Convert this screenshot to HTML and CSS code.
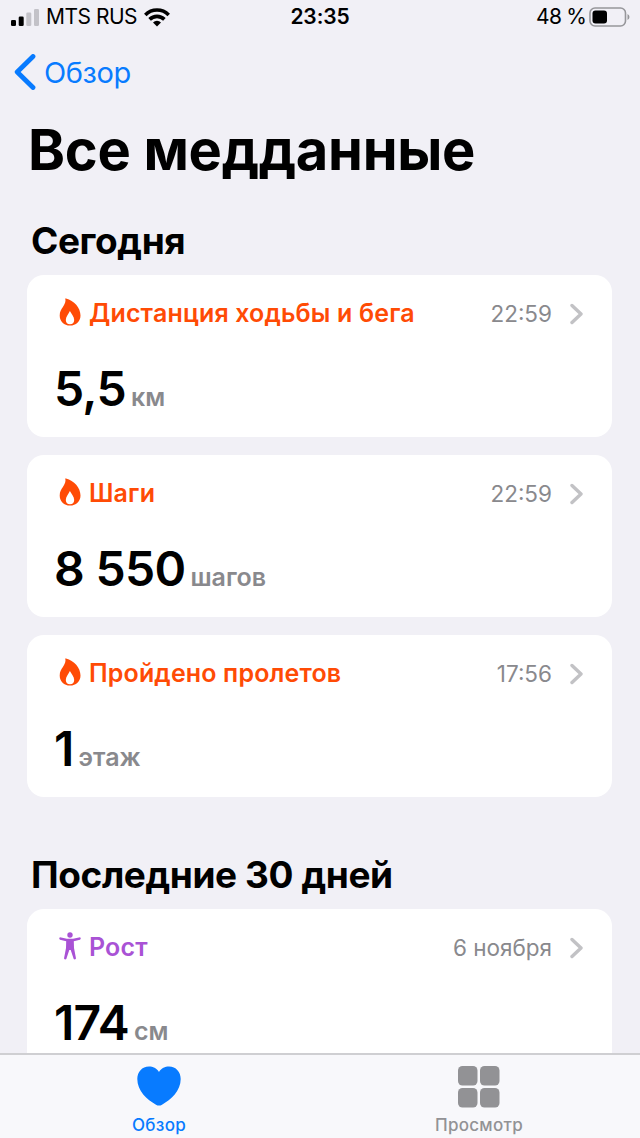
FILE: index.html
```html
<!DOCTYPE html>
<html lang="ru">
<head>
    <meta charset="UTF-8">
    <meta name="viewport" content="width=device-width, initial-scale=1.0">
    <title>Все медданные</title>
    <link rel="stylesheet" href="styles.css">
</head>
<body>
    <svg class="symbols" width="0" height="0">
        <symbol id="flame" viewBox="0 0 22 28">
            <path fill-rule="evenodd" d="M7 .4C15 2.500 21.500 9.500 21.500 17.500C21.500 23.500 17 27.600 11 27.600C5 27.600 .7 23.500 .7 17.500C.7 13.500 2.200 11.500 3.900 9C5.800 6.200 7 3.500 6.300 .8Q6.300 .2 7 .4ZM10.900 13C9.800 15.500 6.800 18.500 6.800 22C6.800 24.800 8.500 26.300 11 26.300C13.500 26.300 15.200 24.800 15.200 22C15.200 18.500 12.200 15.500 10.900 13Z"/>
        </symbol>
        <symbol id="chevron" viewBox="0 0 14 22">
            <path d="M2 2.500 11 11 2 19.500" fill="none" stroke="currentColor" stroke-width="3.400" stroke-linecap="round" stroke-linejoin="round"/>
        </symbol>
    </svg>

    <div class="screen">
        <header class="status-bar">
            <div class="carrier">
                <svg width="28" height="19" viewBox="0 0 28 19">
                    <rect x="0" y="12" width="5" height="6" rx="1.300"/>
                    <rect x="7.700" y="8.500" width="5" height="9.500" rx="1.300"/>
                    <rect class="off" x="15.300" y="4.500" width="5" height="13.500" rx="1.300"/>
                    <rect class="off" x="23" y="1" width="5" height="17" rx="1.300"/>
                </svg>
                <span class="carrier-name">MTS RUS</span>
                <svg width="26" height="19" viewBox="0 0 26 19">
                    <g fill="none" stroke="#000" stroke-width="3.600">
                        <path d="M1.300 6.900A16.500 16.500 0 0 1 24.700 6.900"/>
                        <path d="M5.600 11.400A10.500 10.500 0 0 1 20.400 11.400"/>
                    </g>
                    <path d="M9 14.400A5.800 5.800 0 0 1 17 14.400L13 18.600Z"/>
                </svg>
            </div>
            <div class="clock">23:35</div>
            <div class="battery">
                <span>48 %</span>
                <svg width="41" height="20" viewBox="0 0 41 20">
                    <rect x="1" y="1" width="35.500" height="18" rx="5" fill="none" stroke="#96969a" stroke-width="1.600"/>
                    <rect x="3.500" y="3.500" width="14.500" height="13" rx="3"/>
                    <path d="M38.500 7Q40.500 8 40.500 10T38.500 13Z" fill="#96969a"/>
                </svg>
            </div>
        </header>

        <nav class="nav-bar">
            <svg width="22" height="36" viewBox="0 0 22 36">
                <path d="M19 2.500 3.200 18 19 33.500" fill="none" stroke="currentColor" stroke-width="4.800" stroke-linecap="round" stroke-linejoin="round"/>
            </svg>
            <span>Обзор</span>
        </nav>

        <main class="content">
            <h1>Все медданные</h1>

            <section>
                <h2>Сегодня</h2>
                <article class="card">
                    <div class="card-head">
                        <svg class="icon"><use href="#flame"/></svg>
                        <h3>Дистанция ходьбы и бега</h3>
                        <time>22:59</time>
                        <svg class="chevron"><use href="#chevron"/></svg>
                    </div>
                    <p class="reading"><b>5,5</b><span>км</span></p>
                </article>
                <article class="card">
                    <div class="card-head">
                        <svg class="icon"><use href="#flame"/></svg>
                        <h3>Шаги</h3>
                        <time>22:59</time>
                        <svg class="chevron"><use href="#chevron"/></svg>
                    </div>
                    <p class="reading"><b>8 550</b><span>шагов</span></p>
                </article>
                <article class="card">
                    <div class="card-head">
                        <svg class="icon"><use href="#flame"/></svg>
                        <h3>Пройдено пролетов</h3>
                        <time>17:56</time>
                        <svg class="chevron"><use href="#chevron"/></svg>
                    </div>
                    <p class="reading"><b>1</b><span>этаж</span></p>
                </article>
            </section>

            <section class="month">
                <h2>Последние 30 дней</h2>
                <article class="card body-data">
                    <div class="card-head">
                        <svg class="icon" viewBox="0 0 22 28">
                            <circle cx="11" cy="3" r="2.700"/>
                            <path d="M.9 5.200 8 6.700H14L21.100 5.200Q22.500 6.700 21 7.700L14.800 9.200 15 16 17 26.500Q16 28 14.700 27L11.700 18H10.300L7.300 27Q6 28 5 26.500L7 16 7.200 9.200 1 7.700Q-.5 6.700 .9 5.200Z"/>
                        </svg>
                        <h3>Рост</h3>
                        <time>6 ноября</time>
                        <svg class="chevron"><use href="#chevron"/></svg>
                    </div>
                    <p class="reading"><b>174</b><span>см</span></p>
                </article>
            </section>
        </main>

        <footer class="tab-bar">
            <div class="tab active">
                <svg width="44" height="40" viewBox="0 0 44 40">
                    <path d="M22 6C19.500 2 16 .5 12 .5C5 .5 .3 6 .3 13C.3 25 10 33.500 19 38.700Q22 40.500 25 38.700C34 33.500 43.700 25 43.700 13C43.700 6 39 .5 32 .5C28 .5 24.500 2 22 6Z"/>
                </svg>
                <span>Обзор</span>
            </div>
            <div class="tab">
                <svg width="42" height="42" viewBox="0 0 42 42">
                    <rect x="0" y="0" width="19.500" height="19.500" rx="4.500"/>
                    <rect x="22" y="0" width="19.500" height="19.500" rx="4.500"/>
                    <rect x="0" y="22" width="19.500" height="19.500" rx="4.500"/>
                    <rect x="22" y="22" width="19.500" height="19.500" rx="4.500"/>
                </svg>
                <span>Просмотр</span>
            </div>
        </footer>
    </div>
</body>
</html>
```
FILE: styles.css
```css
:root {
    --bg: #f1f0f6;
    --blue: #087bff;
    --orange: #ff4b05;
    --purple: #a952d5;
    --gray: #89898d;
}

* {
    box-sizing: border-box;
}

body {
    margin: 0;
    background: var(--bg);
    color: #000;
    font-family: Inter, "Liberation Sans", sans-serif;
}

h1, h2, h3, p {
    margin: 0;
}

.symbols {
    position: absolute;
}

.screen {
    display: flex;
    flex-direction: column;
    width: 640px;
    height: 1138px;
    overflow: hidden;
}

/* status bar */
.status-bar {
    display: grid;
    grid-template-columns: 1fr auto 1fr;
    align-items: center;
    flex: none;
    height: 34px;
    padding: 0 10px 0 11px;
    font-size: 21px;
    line-height: 34px;
}

.carrier,
.battery {
    display: flex;
    align-items: center;
}

.carrier {
    gap: 7px;
}

.carrier-name {
    letter-spacing: -0.5px;
}

.carrier .off {
    fill: #c3c2c8;
}

.clock {
    padding-right: 1px;
    font-weight: 600;
    letter-spacing: -0.1px;
}

.battery {
    justify-content: flex-end;
    gap: 3px;
}

.battery span {
    letter-spacing: -0.8px;
}

.nav-bar {
    display: flex;
    align-items: center;
    flex: none;
    gap: 8px;
    height: 76px;
    padding-left: 14px;
    color: var(--blue);
    font-size: 29px;
    letter-spacing: -0.4px;
}

.content {
    flex: 1;
    min-height: 0;
    padding: 0 28px 0 27px;
    overflow: hidden;
}

h1 {
    padding-left: 1px;
    font-size: 56px;
    line-height: 80px;
    letter-spacing: -0.3px;
    white-space: nowrap;
}

h2 {
    margin-bottom: 5px;
    padding: 22px 0 0 4px;
    font-size: 37px;
    line-height: 58px;
    letter-spacing: -0.4px;
    white-space: nowrap;
}

.month {
    padding-top: 9px;
}

/* cards */
.card {
    height: 162px;
    margin-bottom: 18px;
    padding: 18px 28px 0;
    border-radius: 17px;
    background: #fff;
    color: var(--orange);
}

.card.body-data {
    color: var(--purple);
}

.card-head {
    display: flex;
    align-items: center;
    height: 40px;
}

.icon {
    flex: none;
    width: 22px;
    height: 28px;
    margin: 0 8px 2px 4px;
    fill: currentColor;
}

h3 {
    font-size: 25px;
    font-weight: 600;
    letter-spacing: 0.15px;
    white-space: nowrap;
}

time {
    margin-left: auto;
    padding-top: 1px;
    color: var(--gray);
    font-size: 22.5px;
}

.chevron {
    width: 14px;
    height: 22px;
    margin: 1px 0 0 18px;
    color: #c2c2c5;
}

.reading {
    display: flex;
    align-items: baseline;
    gap: 5px;
    height: 72px;
    margin-top: 20px;
    color: #000;
    line-height: 72px;
}

.reading b {
    margin-left: -1px;
    font-size: 48px;
    font-weight: 600;
    letter-spacing: -0.7px;
}

.reading span {
    color: var(--gray);
    font-size: 25px;
    font-weight: 600;
}

/* bottom tabs */
.tab-bar {
    display: flex;
    flex: none;
    height: 85px;
    border-top: 2px solid #cfcfd2;
    background: #f8f8fb;
}

.tab {
    display: flex;
    flex: 1;
    flex-direction: column;
    align-items: center;
    padding: 11px 2px 0 0;
    color: #929295;
    font-size: 17px;
    font-weight: 500;
    line-height: 20px;
    letter-spacing: 0.3px;
}

.tab svg {
    fill: currentColor;
}

.tab span {
    margin-top: auto;
    margin-bottom: 3px;
}

.tab.active {
    color: var(--blue);
}
```
